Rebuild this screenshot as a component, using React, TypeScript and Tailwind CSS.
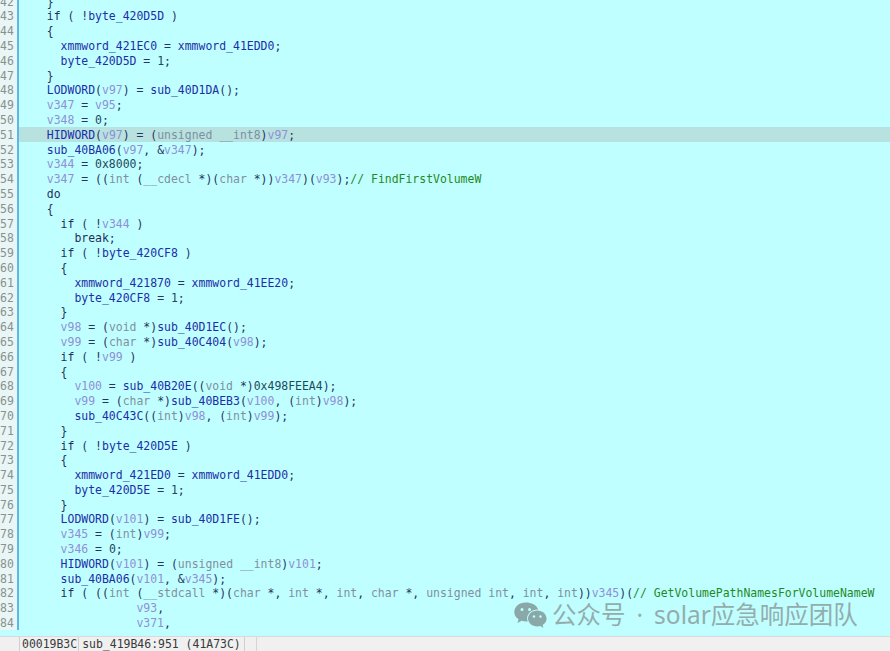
import React from "react"

const lines = [
  [42, 2, "}"],
  [43, 2, "if ( !byte_420D5D )"],
  [44, 2, "{"],
  [45, 4, "xmmword_421EC0 = xmmword_41EDD0;"],
  [46, 4, "byte_420D5D = 1;"],
  [47, 2, "}"],
  [48, 2, "LODWORD(v97) = sub_40D1DA();"],
  [49, 2, "v347 = v95;"],
  [50, 2, "v348 = 0;"],
  [51, 2, "HIDWORD(v97) = (unsigned __int8)v97;"],
  [52, 2, "sub_40BA06(v97, &v347);"],
  [53, 2, "v344 = 0x8000;"],
  [54, 2, "v347 = ((int (__cdecl *)(char *))v347)(v93);// FindFirstVolumeW"],
  [55, 2, "do"],
  [56, 2, "{"],
  [57, 4, "if ( !v344 )"],
  [58, 6, "break;"],
  [59, 4, "if ( !byte_420CF8 )"],
  [60, 4, "{"],
  [61, 6, "xmmword_421870 = xmmword_41EE20;"],
  [62, 6, "byte_420CF8 = 1;"],
  [63, 4, "}"],
  [64, 4, "v98 = (void *)sub_40D1EC();"],
  [65, 4, "v99 = (char *)sub_40C404(v98);"],
  [66, 4, "if ( !v99 )"],
  [67, 4, "{"],
  [68, 6, "v100 = sub_40B20E((void *)0x498FEEA4);"],
  [69, 6, "v99 = (char *)sub_40BEB3(v100, (int)v98);"],
  [70, 6, "sub_40C43C((int)v98, (int)v99);"],
  [71, 4, "}"],
  [72, 4, "if ( !byte_420D5E )"],
  [73, 4, "{"],
  [74, 6, "xmmword_421ED0 = xmmword_41EDD0;"],
  [75, 6, "byte_420D5E = 1;"],
  [76, 4, "}"],
  [77, 4, "LODWORD(v101) = sub_40D1FE();"],
  [78, 4, "v345 = (int)v99;"],
  [79, 4, "v346 = 0;"],
  [80, 4, "HIDWORD(v101) = (unsigned __int8)v101;"],
  [81, 4, "sub_40BA06(v101, &v345);"],
  [82, 4, "if ( ((int (__stdcall *)(char *, int *, int, char *, unsigned int, int, int))v345)(// GetVolumePathNamesForVolumeNameW"],
  [83, 15, "v93,"],
  [84, 15, "v371,"],
] as [number, number, string][]

function tokenClass(tok: string) {
  if (/^v\d+$/.test(tok)) return "text-[#8f8fd6]"
  if (/^(int|char|void|unsigned|__int8|__cdecl|__stdcall)$/.test(tok)) return "text-[#7f8f9f]"
  if (/^(if|do|break)$/.test(tok)) return "text-[#22305c]"
  if (/^0x|^\d+$/.test(tok)) return "text-[#1c4a5c]"
  if (/^[A-Za-z_]/.test(tok)) return "text-[#1c2fa8]"
  return "text-[#26345e]"
}

function CodeText({ text }: { text: string }) {
  const at = text.indexOf("//")
  const code = at >= 0 ? text.slice(0, at) : text
  const tokens = code.match(/[A-Za-z_0-9]+|[^A-Za-z_0-9]+/g) || []
  return (
    <>
      {tokens.map((t, i) => (
        <span key={i} className={tokenClass(t)}>{t}</span>
      ))}
      {at >= 0 && <span className="text-[#1f8a1f]">{text.slice(at)}</span>}
    </>
  )
}

function WechatMark() {
  return (
    <svg width="33" height="27" viewBox="0 0 33 27" className="shrink-0">
      <path d="M11.500 .5C5.200 .5 .3 4.700 .3 10c0 3 1.700 5.600 4.200 7.300L3.500 21l4.200-2.300c1.500.5 3 .8 4.600.8.500 0 1 0 1.400-.1-.4-1-.6-2-.6-3.100 0-5 4.700-8.900 10.300-8.900h.8C22.800 3.200 17.600 .5 11.500 .5z" fill="#8aa8a8" />
      <path d="M32.600 16.500c0-4.400-4.300-8-9.300-8s-9.300 3.600-9.300 8 4.300 8 9.300 8c1 0 2-.1 3-.4l3.100 2-.8-3.100c2.500-1.500 4-3.800 4-6.500z" fill="#8aa8a8" />
      <circle cx="8" cy="7.500" r="1.500" fill="#c0ffff" />
      <circle cx="15.500" cy="7.500" r="1.500" fill="#c0ffff" />
      <circle cx="20" cy="14.500" r="1.200" fill="#c0ffff" />
      <circle cx="26.500" cy="14.500" r="1.200" fill="#c0ffff" />
    </svg>
  )
}

export default function App() {
  return (
    <div className="relative flex h-[651px] w-[890px] flex-col overflow-hidden bg-[#c0ffff] font-['DejaVu_Sans_Mono',monospace] text-[11.46px] leading-[14.8px]">
      <div className="flex-1 overflow-hidden -mt-[6px]">
        {lines.map(([num, indent, text]) => (
          <div key={num} className={`flex h-[14.8px] ${num === 51 ? "bg-[#b8e2e0]" : ""}`}>
            <div className="w-[19px] shrink-0 overflow-hidden border-r-2 border-[#5cb8e6] bg-[#eaf6f6] text-right text-[#85938f]">
              <span className="block pr-[5px] pt-[0.6px] whitespace-nowrap">{num}</span>
            </div>
            <pre className="font-['DejaVu_Sans_Mono',monospace] whitespace-pre pl-[14px] pt-[0.6px]">
              {" ".repeat(indent)}
              <CodeText text={text} />
            </pre>
          </div>
        ))}
      </div>

      <div className="flex h-[15px] shrink-0 items-center border-t border-[#d9d9d9] bg-[#f0f0f0] text-[#3a3a3a]">
        <span className="ml-[19px] border-x border-[#cfcfcf] pl-[2px] pr-[1px] leading-[14px]">00019B3C</span>
        <span className="border-r border-[#cfcfcf] pl-[3px] pr-[3px] leading-[14px]">sub_419B46:951 (41A73C)</span>
        <span className="w-[12px] border-r border-[#d5d5d5] leading-[14px]">&nbsp;</span>
      </div>

      <div className="absolute left-[514px] top-[602px] flex items-center font-['Noto_Sans','Noto_Sans_CJK_SC',sans-serif] text-[24.5px] leading-[28px] text-[#93adad]">
        <WechatMark />
        <span className="-mt-[2px] ml-[5px] whitespace-nowrap">公众号</span>
        <span className="-mt-[2px] mx-[11px]">·</span>
        <span className="-mt-[2px] whitespace-nowrap">solar应急响应团队</span>
      </div>
    </div>
  )
}
